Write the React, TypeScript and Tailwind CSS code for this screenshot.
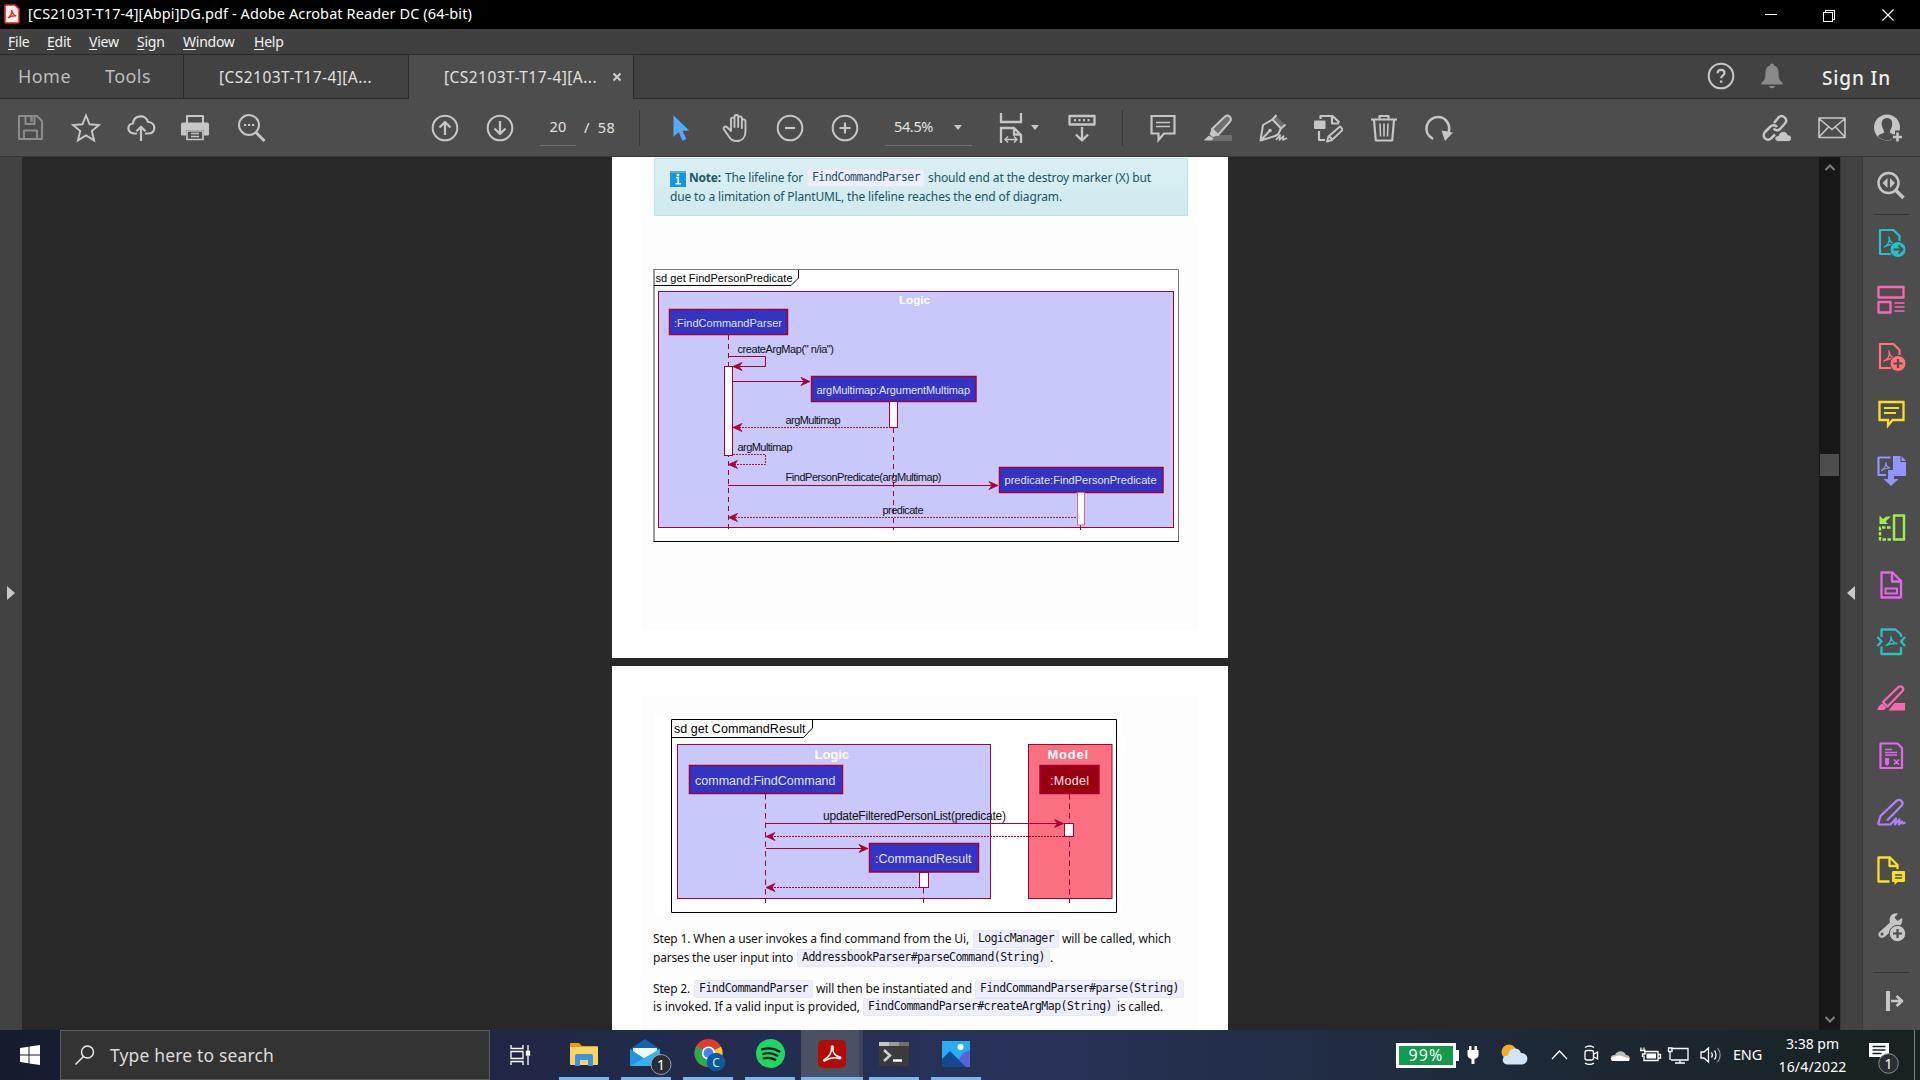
import { useLayoutEffect, useRef } from "react";
import type { ReactNode } from "react";

/* Sets letter spacing so that the label fills the width its class gives. */
function Fit({ className, children }: { className: string; children: string }) {
  const box = useRef<HTMLSpanElement>(null);
  const inner = useRef<HTMLSpanElement>(null);
  useLayoutEffect(() => {
    if (!box.current || !inner.current) return;
    inner.current.style.letterSpacing = "0px";
    const natural = inner.current.getBoundingClientRect().width;
    const target = box.current.getBoundingClientRect().width;
    inner.current.style.letterSpacing = `${(target - natural) / children.length}px`;
  }, [children]);
  return (
    <span ref={box} className={"inline-block shrink-0 whitespace-pre " + className}>
      <span ref={inner}>{children}</span>
    </span>
  );
}

function Icon({ children, className = "" }: { children: ReactNode; className?: string }) {
  return (
    <svg
      viewBox="0 0 30 30"
      width="30"
      height="30"
      className={"shrink-0 " + className}
      fill="none"
      stroke="currentColor"
      strokeWidth="2"
      strokeLinejoin="round"
    >
      {children}
    </svg>
  );
}

function Slot({ children, className = "w-[55px]" }: { children: ReactNode; className?: string }) {
  return <button className={"flex h-full shrink-0 items-center justify-center " + className}>{children}</button>;
}

const menus = [
  { k: "F", rest: "ile", w: "w-[23px]" },
  { k: "E", rest: "dit", w: "w-[26px]" },
  { k: "V", rest: "iew", w: "w-[32px]" },
  { k: "S", rest: "ign", w: "w-[30px]" },
  { k: "W", rest: "indow", w: "w-[55px]" },
  { k: "H", rest: "elp", w: "w-[32px]" },
];

function TitleBar() {
  return (
    <div className="flex h-[29px] items-center bg-black text-white">
      <svg viewBox="0 0 16 20" width="16" height="20" className="mb-[2px] ml-[4px] shrink-0">
        <path d="M2 1h9l4 4v13a1 1 0 0 1-1 1H2a1 1 0 0 1-1-1V2a1 1 0 0 1 1-1z" fill="#f7eeee" stroke="#e1251b" strokeWidth="1.6" />
        <path d="M4 14c3-2 4-5 3.800-8 .6 4 2 5.500 4.500 6-3-.4-6 .2-8.300 2z" fill="none" stroke="#e1251b" strokeWidth="1.300" />
      </svg>
      <Fit className="mb-px ml-[8px] w-[444px] text-[14.500px]">[CS2103T-T17-4][Abpi]DG.pdf - Adobe Acrobat Reader DC (64-bit)</Fit>
      <svg viewBox="0 0 135 14" width="135" height="14" className="mr-[22px] ml-auto" fill="none" stroke="#fff" strokeWidth="1" shapeRendering="crispEdges">
        <path d="M2 6.500h12M60.500 4.500h9v9h-9zM62.500 4.500v-2h9v9h-2" />
        <path d="M119.500 1.500l11 11M130.500 1.500l-11 11" shapeRendering="auto" strokeWidth="1.200" />
      </svg>
    </div>
  );
}

function MenuBar() {
  return (
    <div className="flex h-[26px] items-center gap-[16px] border-b border-[#2a2a2a] bg-[#404040] pl-[8px] text-[14px] text-[#f2f2f2]">
      {menus.map((m) => (
        <span key={m.k} className={"whitespace-nowrap tracking-[-0.250px] " + m.w}>
          <span className="underline underline-offset-2">{m.k}</span>
          {m.rest}
        </span>
      ))}
    </div>
  );
}

function TabBar() {
  return (
    <div className="flex h-[44px] items-stretch bg-[#424242] text-[#e0e0e0]">
      <div className="flex w-[184px] items-center border-r border-b border-[#2a2a2a] pl-[18px] text-[18px] text-[#bdbdbd]">
        <Fit className="w-[53px]">Home</Fit>
        <Fit className="ml-[34px] w-[46px]">Tools</Fit>
      </div>
      <div className="flex w-[225px] items-center border-r border-b border-[#2a2a2a] pt-[2px] pl-[35px] text-[15.500px]">
        <Fit className="w-[153px]">[CS2103T-T17-4][A...</Fit>
      </div>
      <div className="flex w-[225px] items-center border-r border-[#2a2a2a] bg-[#4d4d4d] pt-px pl-[35px] text-[15.500px]">
        <Fit className="w-[153px]">[CS2103T-T17-4][A...</Fit>
        <svg viewBox="0 0 10 10" width="10" height="10" className="mb-[2px] ml-[15px]" stroke="#d0d0d0" strokeWidth="2">
          <path d="M1.500 1.500l7 7M8.500 1.500l-7 7" />
        </svg>
      </div>
      <div className="flex flex-1 items-center border-b border-[#2a2a2a] text-[#c8c8c8]">
        <Icon className="mb-px ml-auto">
          <circle cx="15" cy="15" r="12.300" />
          <path d="M11.500 12.200c0-4.500 7-4.500 7 0 0 2.300-3.300 2.200-3.300 5" strokeWidth="2.200" />
          <path d="M13.900 19.500h2.500v2.200h-2.500z" fill="currentColor" stroke="none" />
        </Icon>
        <Icon className="mb-px ml-[21px] text-[#8a8a8a]">
          <path d="M15 2.500c1.500 0 2 1 2 2 3 1 4.500 3.500 4.500 7 0 7 1.500 8.500 4 10v2h-21v-2c2.500-1.500 4-3 4-10 0-3.500 1.500-6 4.500-7 0-1 .5-2 2-2zM12 25h6c-.5 3-5.500 3-6 0z" fill="currentColor" stroke="none" />
        </Icon>
        <Fit className="mt-[3px] mr-[29px] ml-[35px] w-[69px] text-[19px] font-medium text-[#f0f0f0]">Sign In</Fit>
      </div>
    </div>
  );
}

function Caret({ className = "" }: { className?: string }) {
  return (
    <svg viewBox="0 0 8 5" width="8" height="5" className={"shrink-0 " + className}>
      <path d="M0 0h8L4 5z" fill="#c8c8c8" />
    </svg>
  );
}

function Toolbar() {
  return (
    <div className="flex h-[58px] items-center border-b border-[#363636] bg-[#4d4d4d] pl-[3px] text-[#c6c6c6]">
      <Slot>
        <Icon className="text-[#8c8c8c]">
          <path d="M3 3h18l5 5v18H3zM9.500 3v8h9V3M8 26V17.500h13V26" />
          <path d="M15.500 4v5" strokeWidth="2.500" />
        </Icon>
      </Slot>
      <Slot>
        <Icon>
          <path d="M15 2.500l3.600 8.800 9.400.7-7.200 6.100 2.300 9.300-8.100-5-8.100 5 2.300-9.300L2 12l9.400-.7z" strokeLinejoin="miter" strokeWidth="1.900" />
        </Icon>
      </Slot>
      <Slot>
        <Icon>
          <path d="M11 20.500H8c-7 0-7.500-9.500-1-10C8 1.500 20 1 22 9c8 0 8.500 11 1 11.500h-4M15 28V14M10.500 18.200l4.500-4.500 4.500 4.500" strokeWidth="2.200" />
        </Icon>
      </Slot>
      <Slot className="w-[54px]">
        <Icon>
          <path d="M7 10V3h16v7" />
          <path d="M3 9.500h24a2 2 0 0 1 2 2v10a1 1 0 0 1-1 1h-4V17H6v5.500H2a1 1 0 0 1-1-1v-10a2 2 0 0 1 2-2z" fill="currentColor" stroke="none" />
          <path d="M7 18v8.500h16V18zM11 20.500h8M11 23.500h8" strokeWidth="1.700" />
        </Icon>
      </Slot>
      <Slot className="w-[56px] pl-[4px]">
        <Icon>
          <circle cx="12" cy="12" r="10" />
          <path d="M19 19.500l8.500 8.500" strokeWidth="3" />
          <path d="M7 12h2.200M11 12h2.200M15 12h2.200" strokeWidth="2.200" />
        </Icon>
      </Slot>
      <Slot className="ml-[139px] w-[55px]">
        <Icon>
          <circle cx="15" cy="15" r="12.300" />
          <path d="M15 22V9M9.500 14.500L15 9l5.500 5.500" strokeWidth="2.300" />
        </Icon>
      </Slot>
      <Slot>
        <Icon>
          <circle cx="15" cy="15" r="12.300" />
          <path d="M15 8v13M9.500 15.500L15 21l5.500-5.500" strokeWidth="2.300" />
        </Icon>
      </Slot>
      <div className="ml-[13px] flex h-[36px] w-[36px] items-center justify-center border-b border-[#6e6e6e] text-[14.500px] text-[#e2e2e2]">
        <Fit className="w-[17px]">20</Fit>
      </div>
      <Fit className="ml-[8px] w-[31px] text-[14.500px] text-[#e2e2e2]">/  58</Fit>
      <div className="ml-[24px] h-[36px] w-px bg-[#363636]" />
      <Slot className="ml-[13px] w-[55px]">
        <Icon>
          <path d="M7.500 2.500v21.500l5-5 4 8.800 3.800-1.800-3.700-8 6.600-.5z" fill="#54a9ff" stroke="none" />
        </Icon>
      </Slot>
      <Slot className="w-[54px]">
        <Icon>
          <path d="M9.500 17V6.500c0-2.500 3.500-2.500 3.500 0V14 4c0-2.700 3.700-2.700 3.700 0v10V5.300c0-2.600 3.700-2.600 3.700 0V15 8.200c0-2.500 3.400-2.500 3.600 0V18c0 6-3 10-8.500 10C10.500 28 9 26 7 23l-4.500-6.500c-1.400-2.300 1.300-3.800 3-2.200L9.500 18z" strokeWidth="1.900" transform="translate(1.500 0)" />
        </Icon>
      </Slot>
      <Slot>
        <Icon>
          <circle cx="15" cy="15" r="12.300" />
          <path d="M10 15h10" strokeWidth="2.200" />
        </Icon>
      </Slot>
      <Slot>
        <Icon>
          <circle cx="15" cy="15" r="12.300" />
          <path d="M9.500 15h11M15 9.500v11" strokeWidth="2.200" />
        </Icon>
      </Slot>
      <div className="ml-[13px] flex h-[36px] w-[87px] items-center border-b border-[#6e6e6e] pl-[9px] text-[14.500px] text-[#e2e2e2]">
        <Fit className="w-[39px]">54.5%</Fit>
        <Caret className="ml-[21px]" />
      </div>
      <Icon className="ml-[24px]">
        <path d="M5 0v9h20V0M5 30V15h13l7 7v8M18 15v6.500h7" strokeWidth="2.300" strokeLinejoin="miter" />
        <path d="M9 26.500h12M12 23.500l-3 3 3 3M18 23.500l3 3-3 3" strokeWidth="1.500" />
      </Icon>
      <Caret className="ml-[5px]" />
      <Icon className="ml-[28px]">
        <path d="M2.500 3h25v8.500h-25zM15 14v13M9 21.500l6 6 6-6" strokeWidth="2.300" />
        <path d="M7 7.200h2M11.500 7.200h2M16 7.200h2M20.500 7.200h2" strokeWidth="2.200" />
      </Icon>
      <div className="ml-[25px] h-[36px] w-px bg-[#363636]" />
      <Icon className="ml-[25px]">
        <path d="M3.500 3h23v17.500H16L10.500 27v-6.500h-7z" strokeLinejoin="miter" strokeWidth="2.200" />
        <path d="M8 9.500h14M8 13.500h14" strokeWidth="1.500" />
      </Icon>
      <Icon className="ml-[25px]">
        <path d="M9 22h20v6H6z" fill="#6e6e6e" stroke="none" />
        <path d="M9 16L22 3.500c3.500-2.500 7.500 1.500 5 5L15 22z" fill="#6e6e6e" />
        <path d="M9 16l-2 5.500 2.500 2L15 22M6 23l-4.500 4h7l1.500-1.500z" fill="currentColor" strokeWidth="1" />
      </Icon>
      <Icon className="ml-[25px]">
        <path d="M18 3l9 9-3.500 3-9-9z" fill="#6e6e6e" stroke="none" />
        <path d="M18.500 2l-4 4.500M27.500 11.500l-4.500 4M14.500 6.500l8.500 9-3 6-3 1.500-14.500 4.500L5 12zM2.500 27.500l8.500-9" />
        <circle cx="12" cy="17.500" r="1.800" fill="currentColor" stroke="none" />
        <path d="M18 27l4-5-.5 5 4-4-.5 4 4-2" strokeWidth="1.700" />
      </Icon>
      <Icon className="ml-[25px]">
        <path d="M7.500 6V3h12l7 6.500M19 3v7.500h7M6 18v9h6" strokeWidth="2.200" />
        <rect x="1" y="7.500" width="11.500" height="8.500" rx="1" fill="currentColor" stroke="none" />
        <path d="M27 13.500l3 3L19 27l-5 1.500 1.500-5zM16 23l3.500 3.500" strokeWidth="1.900" />
      </Icon>
      <Icon className="ml-[26px]">
        <path d="M2 6.500h26M10.500 6V3h9v3M5 7l1.800 20.500h16.400L25 7" strokeWidth="2.200" />
        <path d="M11 10.500l.5 13M15 10.500v13M19 10.500l-.5 13" strokeWidth="1.600" />
      </Icon>
      <Icon className="ml-[24px]">
        <path d="M10 26C-2 19 4 4 15 4c8 0 13 8 10.500 15.500" strokeWidth="2.600" />
        <path d="M18.500 17.500l11.500 2-8 8.500z" fill="currentColor" stroke="none" />
      </Icon>
      <Icon className="ml-auto">
        <path d="M13 10l4.500-5.500c4-4 10 1.500 6.500 6L19 16c-2 2-5 1.500-6.500-.5M16 14c-1.500-2.500-5-2.500-7 0L4 19c-4 5 2.500 10.500 6.500 6l3.500-3.500" strokeWidth="2.500" />
        <path d="M17.500 28.500c-5 0-4.500-6 0-6 1-5 8-5.500 9.500-.5 5 0 4.500 6.500 0 6.500z" fill="currentColor" stroke="#4d4d4d" strokeWidth="0.800" />
      </Icon>
      <Icon className="ml-[26px]">
        <path d="M2 5h26v19.500H2zM2 5.500l13 11 13-11M2 24l9.500-10M28 24l-9.500-10" strokeWidth="1.600" />
      </Icon>
      <Icon className="mr-[17px] ml-[26px]">
        <circle cx="14" cy="14.500" r="13" fill="currentColor" stroke="none" />
        <path d="M14 5c-4.500 0-6 4-5 8 .5 2.500 2 4 2 6 0 2-5 1.500-6 4.500 5 5 13 5 18 0-1-3-6-2.500-6-4.500s1.500-3.500 2-6c1-4-.5-8-5-8z" fill="#4d4d4d" stroke="none" />
        <path d="M24.500 17.500v12M18.500 24H30" stroke="#4d4d4d" strokeWidth="5" />
        <path d="M24.500 19.500v9M20 24h9" strokeWidth="2.600" />
      </Icon>
    </div>
  );
}

function Arrow({ x, y, dir }: { x: number; y: number; dir: 1 | -1 }) {
  const b = -dir;
  return (
    <path
      d={`M${x} ${y}L${x + b * 9} ${y - 4}L${x + b * 6} ${y}L${x + b * 9} ${y + 4}Z`}
      fill="#a80036"
      stroke="#a80036"
      strokeWidth="0.800"
      strokeDasharray="none"
    />
  );
}

function Label({
  x,
  x2,
  y,
  children,
  fill = "#111",
  size = 11,
  bold = false,
}: {
  x: number;
  x2: number;
  y: number;
  children: string;
  fill?: string;
  size?: number;
  bold?: boolean;
}) {
  return (
    <text
      x={x}
      y={y}
      fontSize={size}
      fill={fill}
      stroke="none"
      textLength={x2 - x}
      fontWeight={bold ? 700 : 400}
      fontFamily='"Liberation Sans", Arial, sans-serif'
    >
      {children}
    </text>
  );
}

function PredicateDiagram() {
  return (
    <svg viewBox="652 268 530 276" width="530" height="276" className="block" fill="none" stroke="#a80036">
      <path d="M652 268h530v276H652z" fill="#fff" stroke="none" />
      <path d="M654 269.500h524.500V541" stroke="#777" />
      <path d="M654 269v272.500" stroke="#777" strokeWidth="1.500" />
      <path d="M653.500 541.500h525.500M654 285.500h137l7.500-7.500v-8" stroke="#000" />
      <Label x={655.5} x2={792.5} y={281.5} fill="#000">sd get FindPersonPredicate</Label>
      <rect x="658.500" y="291.500" width="515" height="236" fill="#c8c8fa" />
      <Label x={899} x2={930} y={303.5} fill="#fff" size={11.5} bold>Logic</Label>
      <path d="M728.500 335v198M893.500 428v102M1080.500 525v8" strokeDasharray="5 4" />
      <rect x="669.500" y="309.500" width="118" height="25" fill="#3333c4" strokeWidth="1.500" />
      <Label x={674} x2={782} y={326.5} fill="#e4e4ff">:FindCommandParser</Label>
      <Label x={737.5} x2={834} y={353}>createArgMap(" n/ia")</Label>
      <path d="M728 356.500h37.500v10H733M733 381.500h75M728 485.500h268" />
      <rect x="724.500" y="366.500" width="8" height="89" fill="#fff" />
      <rect x="811.500" y="376.500" width="164.500" height="25" fill="#3333c4" strokeWidth="1.500" />
      <Label x={816.5} x2={970} y={393.5} fill="#e4e4ff">argMultimap:ArgumentMultimap</Label>
      <rect x="889.500" y="401.500" width="8" height="26" fill="#fff" />
      <Label x={785.5} x2={840.5} y={424}>argMultimap</Label>
      <Label x={737.5} x2={792.5} y={451}>argMultimap</Label>
      <path d="M733 427.500h156M733 454.500h32.500v10H729M729 517.500h348" strokeDasharray="2 1" strokeWidth="0.900" />
      <Label x={785.5} x2={941.5} y={481}>FindPersonPredicate(argMultimap)</Label>
      <rect x="999.500" y="467.500" width="163.500" height="25" fill="#3333c4" strokeWidth="1.500" />
      <Label x={1004.5} x2={1156.5} y={484} fill="#e4e4ff">predicate:FindPersonPredicate</Label>
      <rect x="1077.500" y="492.500" width="7" height="32.500" fill="#fff" stroke="#cf6a8a" />
      <Label x={882.5} x2={923.5} y={514}>predicate</Label>
      <Arrow x={733} y={366.5} dir={-1} />
      <Arrow x={810} y={381.5} dir={1} />
      <Arrow x={733} y={427.5} dir={-1} />
      <Arrow x={728.5} y={464.5} dir={-1} />
      <Arrow x={998} y={485.5} dir={1} />
      <Arrow x={728.5} y={517.5} dir={-1} />
    </svg>
  );
}

function ResultDiagram() {
  return (
    <svg viewBox="654 714 468 202" width="468" height="202" className="ml-px block" fill="none" stroke="#a80036">
      <path d="M654 714h468v202H654z" fill="#fff" stroke="none" />
      <path d="M671.500 719.500h445v193h-445zM671.500 737.500h132l9-9.500v-8" stroke="#000" />
      <Label x={674} x2={805.5} y={733} size={12.5} fill="#000">sd get CommandResult</Label>
      <rect x="677.500" y="744.500" width="313" height="154" fill="#c8c8fa" />
      <rect x="1028.500" y="744.500" width="83.500" height="154" fill="#fa7080" />
      <Label x={814.5} x2={849} y={758.5} size={13} fill="#fff" bold>Logic</Label>
      <Label x={1047.5} x2={1088} y={758.5} size={13} fill="#fff" bold>Model</Label>
      <path d="M765.500 794v109M923.500 888v15M1069.500 794v109" strokeDasharray="5.500 4" />
      <rect x="689.500" y="765.500" width="153" height="28" fill="#3333c4" strokeWidth="1.500" />
      <Label x={695} x2={835.5} y={784.5} size={12.5} fill="#e4e4ff">command:FindCommand</Label>
      <rect x="1040" y="765.500" width="59" height="28" fill="#980010" strokeWidth="1.500" />
      <Label x={1050} x2={1089} y={784.5} size={12.5} fill="#ffe4e8">:Model</Label>
      <Label x={823} x2={1006} y={819.5} size={12}>updateFilteredPersonList(predicate)</Label>
      <path d="M766 823.500h295M766 848.500h100" />
      <rect x="1064.500" y="823.500" width="9" height="13" fill="#fff" />
      <rect x="869.500" y="843.500" width="109" height="28.500" fill="#3333c4" strokeWidth="1.500" />
      <Label x={875} x2={971.5} y={863} size={12.5} fill="#e4e4ff">:CommandResult</Label>
      <rect x="919.500" y="872.500" width="9" height="15" fill="#fff" />
      <path d="M768 836.500h296M768 887.500h151" strokeDasharray="2 1" />
      <Arrow x={1063.5} y={823.5} dir={1} />
      <Arrow x={766} y={836.5} dir={-1} />
      <Arrow x={868} y={848.5} dir={1} />
      <Arrow x={766} y={887.5} dir={-1} />
    </svg>
  );
}

function Code({ className, children }: { className: string; children: string }) {
  return (
    <span className="flex h-[18px] shrink-0 items-center rounded-[2px] border border-[#e8e8f2] bg-[#eeeeff] px-[4px] font-['DejaVu_Sans_Mono',monospace] text-[11.500px]">
      <Fit className={className}>{children}</Fit>
    </span>
  );
}

function Pages() {
  return (
    <div className="w-[616px] shrink-0 overflow-hidden text-[12px] text-[#111]">
      <div className="h-[501px] bg-white px-[30px]">
        <div className="flex h-[473px] flex-col bg-[#fdfdfd] px-[10px] pt-px">
          <div className="ml-[2px] h-[58px] w-[534px] border border-[#bee5eb] bg-linear-to-b from-[#daeff3] to-[#d0eaef] pt-[9px] pl-[15px] text-[#1b5563]">
            <div className="flex h-[20px] items-center">
              <svg viewBox="0 0 16 16" width="16" height="16" className="mt-px shrink-0">
                <path d="M0 0h16v16H0z" fill="#1397e0" />
                <path d="M0 0h16v2H0z" fill="#5fb0c8" />
                <path d="M6 6.500h2.200V12.500M5.500 12.700h5.500" fill="none" stroke="#fff" strokeWidth="1.500" />
                <path d="M6.800 2.800h2.400v2.200H6.800z" fill="#fff" />
              </svg>
              <Fit className="ml-[3px] w-[32px] font-bold">Note:</Fit>
              <Fit className="mr-[4px] ml-[4px] w-[78px]">The lifeline for</Fit>
              <Code className="w-[108px]">FindCommandParser</Code>
              <Fit className="ml-[3px] w-[223px]">should end at the destroy marker (X) but</Fit>
            </div>
            <div className="flex h-[18px] items-center">
              <Fit className="w-[392px]">due to a limitation of PlantUML, the lifeline reaches the end of diagram.</Fit>
            </div>
          </div>
          <div className="mt-[52px]">
            <PredicateDiagram />
          </div>
        </div>
      </div>
      <div className="h-[8px] bg-[#282828]" />
      <div className="h-[364px] bg-white px-[30px] pt-[30px]">
        <div className="h-[334px] bg-[#fdfdfd] pt-[18px] pl-[11px]">
          <ResultDiagram />
          <div className="mt-[13px] flex h-[19px] items-center">
            <Fit className="mr-[4px] w-[316px]">Step 1. When a user invokes a find command from the Ui,</Fit>
            <Code className="w-[76px]">LogicManager</Code>
            <Fit className="ml-[3px] w-[109px]">will be called, which</Fit>
          </div>
          <div className="flex h-[19px] items-center">
            <Fit className="mr-[4px] w-[140px]">parses the user input into</Fit>
            <Code className="w-[243px]">AddressbookParser#parseCommand(String)</Code>
            <span>.</span>
          </div>
          <div className="mt-[13px] flex h-[18px] items-center">
            <Fit className="mr-[4px] w-[37px]">Step 2.</Fit>
            <Code className="w-[109px]">FindCommandParser</Code>
            <Fit className="mr-[3px] ml-[3px] w-[156px]">will then be instantiated and</Fit>
            <Code className="w-[199px]">FindCommandParser#parse(String)</Code>
          </div>
          <div className="flex h-[18px] items-center">
            <Fit className="mr-[3px] w-[207px]">is invoked. If a valid input is provided,</Fit>
            <Code className="w-[244px]">FindCommandParser#createArgMap(String)</Code>
            <Fit className="w-[46px]">is called.</Fit>
          </div>
        </div>
      </div>
    </div>
  );
}

function PdfMark() {
  return <path d="M8 19c4-2 6-6 5-10 .5 5 3 7 7 7-5 0-8.500 1-12 3z" strokeWidth="1.400" />;
}

function ToolPane() {
  const item = "flex h-[57px] w-full items-center justify-center";
  return (
    <div className="flex w-[58px] shrink-0 flex-col items-center border-l border-[#3a3a3a] bg-[#4d4d4d] pr-px">
      <div className="flex h-[57px] w-full items-center justify-center text-[#c6c6c6]">
        <Icon>
          <circle cx="12.500" cy="12" r="10" strokeWidth="2.500" />
          <path d="M20 19.500l7.500 7.500" strokeWidth="3.500" />
          <path d="M11.500 7v10l-5-5zM14 7v10l5-5z" fill="currentColor" stroke="none" />
        </Icon>
      </div>
      <div className="-mb-px h-px w-[35px] shrink-0 bg-[#363636]" />
      <div className={item + " text-[#26c0c7]"}>
        <Icon>
          <path d="M15 26H4V2h13.500l6 6v5" strokeWidth="2.200" />
          <PdfMark />
          <circle cx="22" cy="21.500" r="8" fill="currentColor" stroke="#4d4d4d" strokeWidth="1" />
          <path d="M17.500 21.500H26M22.500 17.500l4 4-4 4" stroke="#4d4d4d" />
        </Icon>
      </div>
      <div className={item + " text-[#f768b4]"}>
        <Icon>
          <path d="M2.500 2h25v10.500h-25zM2.500 17h12v10.500h-12z" strokeWidth="2.300" />
          <path d="M18.500 18h10M18.500 22h10M18.500 26h10" strokeWidth="1.500" />
        </Icon>
      </div>
      <div className={item + " text-[#ff7378]"}>
        <Icon>
          <path d="M15 26H4V2h13.500l6 6v5" strokeWidth="2.200" />
          <PdfMark />
          <circle cx="22" cy="21.500" r="8" fill="currentColor" stroke="#4d4d4d" strokeWidth="1" />
          <path d="M17.500 21.500h9M22 17v9" stroke="#4d4d4d" strokeWidth="2.200" />
        </Icon>
      </div>
      <div className={item + " text-[#fbdc27]"}>
        <Icon>
          <path d="M3.500 3h24v18H16.500L12 26.500V21H3.500z" strokeWidth="2.300" strokeLinejoin="miter" />
          <path d="M8 9h15M8 14h12" />
        </Icon>
      </div>
      <div className={item + " text-[#9494ff]"}>
        <Icon>
          <path d="M10 19H2.500V1.500h12" strokeWidth="2.200" />
          <path d="M5.500 14.500c3-2 4.500-4.500 4.500-8 0 3 1.500 5 4 5.500-3 0-6 .5-8.500 2.500z" strokeWidth="1.200" />
          <path d="M17 0h7.500v6H30v14H18v3h4.500L15 30l-7.500-7H12v-9h5zM25.500 0L30 5h-4.500z" fill="currentColor" stroke="none" />
        </Icon>
      </div>
      <div className={item + " text-[#9bf04d]"}>
        <Icon>
          <path d="M18 2.500h10v24H18z" strokeWidth="2.500" />
          <path d="M15 26.500H4v-12h11" strokeWidth="2.500" strokeDasharray="3.500 1.500" />
          <path d="M3.500 2.500v8.500h8.500L9.500 8.500 15 3.500h-4.500L7 6z" fill="currentColor" stroke="none" />
        </Icon>
      </div>
      <div className={item + " text-[#e466ee]"}>
        <Icon>
          <path d="M5.500 2.500h11l8.500 8.500v16.500H5.500zM16 3v8.500h9" strokeWidth="2.300" />
          <path d="M9.500 18.500h11.500v5H9.500z" />
        </Icon>
      </div>
      <div className={item + " text-[#26c0c7]"}>
        <Icon>
          <path d="M5.500 10V2.500h14l5.500 5v2.500M5.500 19.500v7.500H25v-7" strokeWidth="2.300" />
          <path d="M1.500 10l4 4.500-4 4.500M29 10l-4 4.500 4 4.500" strokeWidth="2.300" />
          <path d="M10 18.500c3.500-2 5.500-5 5-9 .5 4 2.500 6.500 6 7-4-.2-7.500.2-11 2z" strokeWidth="1.400" />
        </Icon>
      </div>
      <div className={item + " text-[#f768ad]"}>
        <Icon>
          <path d="M7 18L22.500 3c3-2 6 1.500 4 4L11.500 22.500z" strokeWidth="2.300" />
          <path d="M6.500 19.500l4 4L8 26H1.500c0-2.500 2-5.500 5-6.500zM18.500 19H29v7.500H12.500z" fill="currentColor" stroke="none" />
        </Icon>
      </div>
      <div className={item + " text-[#e466ee]"}>
        <Icon>
          <path d="M4.500 2.500h17L26 7v20H4.500z" strokeWidth="2.200" />
          <path d="M9 8.500h7M9 11.500h12M9 14h12M18 18.500l5 5M23 18.500l-5 5" strokeWidth="1.500" />
          <path d="M9 17h4v6l-2 2-2-2z" fill="currentColor" stroke="none" />
        </Icon>
      </div>
      <div className={item + " text-[#b080f5]"}>
        <Icon>
          <path d="M2 26.500l2.500-8.500L20.500 2.800c3.500-2.500 8 1.500 5 5L11 22.500" strokeWidth="2.300" />
          <path d="M2 26.500h12.500l5.500-6-1 6 4.500-5-.5 5 3-3 .5 2 3-1" strokeWidth="2.200" />
        </Icon>
      </div>
      <div className={item + " text-[#fbdc27]"}>
        <Icon>
          <path d="M13.500 26.500h-11v-24h11.500l7.500 7.500v4M13.500 3v8h8" strokeWidth="2.300" />
          <path d="M17 16h11a1 1 0 0 1 1 1v9a1 1 0 0 1-1 1h-6.500L18.500 30v-3H17a1 1 0 0 1-1-1v-9a1 1 0 0 1 1-1z" fill="currentColor" stroke="none" />
          <path d="M19 20h7M19 23h7" stroke="#4d4d4d" strokeWidth="1.400" />
        </Icon>
      </div>
      <div className={item + " text-[#c6c6c6]"}>
        <Icon>
          <path d="M3 20.500L14 10.500C12.500 5 16 .500 22 1.500l-3.500 4 3 3.500 4.500-3c1 3.500-.5 7-3 8-4-.500-7 2-7.500 5L9 24.500c-4 3.500-8-1-6-4z" fill="currentColor" stroke="none" />
          <circle cx="6" cy="22" r="1.500" fill="#4d4d4d" stroke="none" />
          <circle cx="21.500" cy="21.500" r="8.200" fill="currentColor" stroke="#4d4d4d" strokeWidth="1" />
          <path d="M17 21.500h9M21.500 17v9" stroke="#4d4d4d" strokeWidth="2.200" />
        </Icon>
      </div>
      <div className="mt-[17px] h-px w-[35px] bg-[#363636]" />
      <div className="flex flex-1 items-center pb-px pl-[5px] text-[#c6c6c6]">
        <Icon>
          <path d="M9 5v20" strokeWidth="4" />
          <path d="M12 15h11M17.500 10l5.500 5-5.500 5" strokeWidth="2.700" />
        </Icon>
      </div>
    </div>
  );
}

function Viewer() {
  return (
    <div className="flex h-[873px] bg-[#282828]">
      <div className="flex w-[22px] shrink-0 items-center bg-[#424242] pb-[2px] pl-[7px]">
        <svg viewBox="0 0 8 14" width="8" height="14">
          <path d="M0 0v14l8-7z" fill="#c8c8c8" />
        </svg>
      </div>
      <div className="flex flex-1 pl-[590px]">
        <Pages />
      </div>
      <div className="flex w-[21px] shrink-0 flex-col items-center bg-[#171717]">
        <svg viewBox="0 0 10 7" width="10" height="7" className="mt-[7px]" fill="none" stroke="#7e7e7e" strokeWidth="2">
          <path d="M.500 6L5 1.500 9.500 6" />
        </svg>
        <div className="mt-[283px] h-[22px] w-[19px] bg-[#4d4d4d]" />
        <svg viewBox="0 0 10 7" width="10" height="7" className="mt-auto mb-[7px]" fill="none" stroke="#7e7e7e" strokeWidth="2">
          <path d="M.500 1L5 5.500 9.500 1" />
        </svg>
      </div>
      <div className="flex w-[22px] shrink-0 items-center border-l border-[#363636] bg-[#424242] pb-[2px] pl-[6px]">
        <svg viewBox="0 0 8 14" width="8" height="14">
          <path d="M8 0v14L0 7z" fill="#c8c8c8" />
        </svg>
      </div>
      <ToolPane />
    </div>
  );
}

function TaskButton({ children, active = false }: { children: ReactNode; active?: boolean }) {
  return (
    <div className={"flex h-full w-[62px] flex-col items-center " + (active ? "border-r-4 border-[#3d4358] bg-[#4b5165]" : "")}>
      <div className="flex h-[47px] items-center">{children}</div>
      <div className={"h-[3px] bg-[#76b9ed] " + (active ? "-mr-1 w-[62px]" : "w-[50px]")} />
    </div>
  );
}

function Taskbar() {
  return (
    <div className="flex h-[50px] items-stretch bg-linear-to-r from-[#161c2e] via-[#28325a] via-52% to-[#17211f] text-white">
      <div className="flex w-[60px] items-center justify-center">
        <svg viewBox="0 0 20 20" width="20" height="20" fill="#fff">
          <path d="M0 3l8.500-1.200v7.700H0zM9.500 1.600L20 0v9.500H9.500zM0 10.500h8.500v7.700L0 17zM9.500 10.500H20V20L9.500 18.400z" />
        </svg>
      </div>
      <div className="flex w-[430px] items-center border border-[#5c5c5c] bg-[#333] pl-[14px]">
        <svg viewBox="0 0 20 20" width="20" height="20" fill="none" stroke="#f0f0f0" strokeWidth="1.400">
          <circle cx="12.500" cy="7" r="6" />
          <path d="M8.500 11.500L.500 19.500" />
        </svg>
        <Fit className="ml-[15px] w-[164px] text-[17.500px] text-[#dcdcdc]">Type here to search</Fit>
      </div>
      <div className="flex w-[63px] items-center justify-center pr-[2px]">
        <svg viewBox="0 0 21 20" width="21" height="20" fill="none" stroke="#fff" strokeWidth="1.300">
          <path d="M1 0v3.500h12V0M1 20v-3.500h12V20M1 6.500h12v7H1zM18 0v6M18 11v9" />
          <path d="M16.500 6.500h3v3.500h-3z" fill="#fff" />
        </svg>
      </div>
      <TaskButton>
        <svg viewBox="0 0 28 24" width="28" height="24">
          <path d="M0 2a1 1 0 0 1 1-1h8l3 3h15a1 1 0 0 1 1 1v17H0z" fill="#e2a10e" />
          <path d="M0 5h28v17a1 1 0 0 1-1 1H1a1 1 0 0 1-1-1z" fill="#fdd364" />
          <path d="M5 24V14a2 2 0 0 1 2-2h14a2 2 0 0 1 2 2v10h-5v-6h-8v6z" fill="#3a93dc" />
        </svg>
      </TaskButton>
      <TaskButton>
        <svg viewBox="0 -6 42 44" width="42" height="44" className="ml-[10px]">
          <path d="M0 11L15 1l15 10v17H0z" fill="#0f62b8" />
          <path d="M3 10h24v10H3z" fill="#f4f8fc" />
          <path d="M0 11l15 10 15-10v17H0z" fill="#1f93e4" />
          <path d="M0 28L30 11v17z" fill="#38b1f2" />
          <circle cx="31" cy="26.500" r="10" fill="#2a2d35" stroke="#9a9da5" />
          <text x="31" y="31.500" textAnchor="middle" fontSize="14" fill="#fff" fontFamily='"Noto Sans", sans-serif'>1</text>
        </svg>
      </TaskButton>
      <TaskButton>
        <svg viewBox="0 0 32 34" width="32" height="34" className="mt-[2px] ml-[3px]">
          <circle cx="14.500" cy="15" r="14" fill="#e33b2e" />
          <path d="M14.500 15L27 8.700A14 14 0 0 1 14.500 29z" fill="#fcc934" />
          <path d="M14.500 15v14A14 14 0 0 1 2.400 8z" fill="#2da94f" />
          <circle cx="14.500" cy="15" r="6.600" fill="#fff" />
          <circle cx="14.500" cy="15" r="5" fill="#4285f4" />
          <circle cx="22" cy="24" r="9.300" fill="#0c5a9e" />
          <text x="22" y="28.500" textAnchor="middle" fontSize="12" fill="#cfe4f7" fontFamily='"Noto Sans", sans-serif'>C</text>
        </svg>
      </TaskButton>
      <TaskButton>
        <svg viewBox="0 0 28 28" width="29" height="29">
          <circle cx="14" cy="14" r="14" fill="#1ed760" />
          <path d="M6 10c5.500-1.500 11.500-1 16.500 2M7 14.500c4.500-1.300 9.500-.8 13.500 1.600M7.500 18.700c4-1 7.500-.6 11 1.400" fill="none" stroke="#10182a" strokeWidth="2.200" strokeLinecap="round" />
        </svg>
      </TaskButton>
      <TaskButton active>
        <svg viewBox="0 0 28 28" width="28" height="28" className="ml-[3px]">
          <rect width="28" height="28" rx="5" fill="#b30b00" />
          <path d="M6 20c5-3 8-8 7.500-13-.2-1.500 1.800-1.500 1.500.5-.8 4.500 2 9 7 9.500 1.500.5.500 2-1 1.500-4.500-1.500-9-1-13.500 2-1 .8-2.200.2-1.500-.5z" fill="none" stroke="#fff" strokeWidth="1.500" />
        </svg>
      </TaskButton>
      <TaskButton>
        <svg viewBox="0 0 30 24" width="30" height="24" className="mr-px">
          <rect width="30" height="24" rx="1.500" fill="#3b3b3b" />
          <path d="M0 0h10v4H0z" fill="#c8c8c8" />
          <path d="M10 0h10v4H10z" fill="#9a9a9a" />
          <path d="M20 0h10v4H20z" fill="#707070" />
          <path d="M5 8l6 5.500L5 19" fill="none" stroke="#d0d0d0" strokeWidth="2.500" />
          <path d="M14 18.500h9" stroke="#fff" strokeWidth="2.500" />
        </svg>
      </TaskButton>
      <TaskButton>
        <svg viewBox="0 0 28 28" width="28" height="28">
          <path d="M0 1h28v26H0z" fill="#27aef0" />
          <path d="M28 10v17H12l9-14z" fill="#5a62d8" />
          <path d="M0 19L8 11l16 16H0z" fill="#124a92" />
          <circle cx="18.500" cy="7" r="3" fill="#fff" />
        </svg>
      </TaskButton>
      <div className="ml-auto flex items-center">
        <div className="flex h-[25px] w-[60px] items-center justify-center border-[3px] border-white bg-[#149a49] text-[16px]">
          <Fit className="w-[35px] leading-none">99%</Fit>
        </div>
        <div className="h-[11px] w-[3px] bg-white" />
        <svg viewBox="0 0 12 18" width="12" height="18" className="ml-[8px]" fill="#fff">
          <path d="M2 0h2.500v4h3V0H10v4h1.500v5c0 2.500-2 3.500-4 4v5h-3v-5c-2-.5-4-1.500-4-4V4H2z" />
        </svg>
        <svg viewBox="0 0 28 22" width="28" height="22" className="ml-[22px]">
          <circle cx="8" cy="8" r="7.500" fill="#f9a825" />
          <path d="M7 20.500c-7 0-7-9 0-9C8 3 18 2.500 20 9c8.500 0 8.500 11.500 0 11.500z" fill="#cfe6fa" />
        </svg>
        <svg viewBox="0 0 138 20" width="138" height="20" className="ml-[22px]" fill="none" stroke="#fff" strokeWidth="1.300">
          <path d="M1 14l7.500-8 7.500 8" />
          <rect x="34" y="5.500" width="8.500" height="9.500" rx="2" />
          <path d="M43 9l3.500-2v7L43 12M34 2.500c3-2 6-2 9 0M34 18c3 2 6 2 9 0" />
          <path d="M62 16c-4-1-2.500-7 2-6 2-5 9-5 11 0 5 0 5 6 1 6z" fill="#b9bcbd" stroke="none" />
          <path d="M62 16c-3.500-1-2-4.500 2-4.500 4-2.500 9 0 10 1 4-.5 6 3.500 3 3.500z" fill="#fff" stroke="none" />
          <path d="M93 6.500h14v9H93v-5M107.500 9.500h2v3.500h-2M90 2.500v3M93 2.500v3M89 5.500h5v3.500h-2.500v3" />
          <path d="M95.500 8.500h9.500v5H95.500z" fill="#fff" stroke="none" />
          <path d="M120 3.500h17v11.500h-17M129 15v3M124 18h10M117.500 3h3.500v3.500h-3.500zM119 7v8" />
        </svg>
        <svg viewBox="0 0 22 18" width="22" height="18" className="ml-[11px]" fill="none" stroke="#fff" strokeWidth="1.300">
          <path d="M1 6h3l4.500-4v14L4 12H1zM11.500 6.500c1 1.500 1 3.500 0 5M14.500 4.500c2 2.500 2 6.500 0 9" />
          <path d="M17.500 2c3.500 4 3.500 10 0 14" stroke="#8a8f92" />
        </svg>
        <Fit className="ml-[11px] w-[29px] text-[14.500px]">ENG</Fit>
        <div className="ml-[16px] flex w-[70px] flex-col items-center pr-px text-[14px] leading-[23px]">
          <Fit className="w-[53px]">3:38 pm</Fit>
          <Fit className="w-[68px]">16/4/2022</Fit>
        </div>
        <svg viewBox="0 0 32 34" width="32" height="34" className="mt-[9px] ml-[21px]">
          <path d="M0 0h20v14h-4v5l-5-5H0z" fill="#fff" />
          <path d="M3.500 3.500h13M3.500 7h13M3.500 10.500h9" stroke="#1a2026" strokeWidth="1.500" />
          <circle cx="19.500" cy="20.500" r="9.800" fill="#2b2f33" stroke="#8a8f92" />
          <text x="19.500" y="25.500" textAnchor="middle" fontSize="14" fill="#fff" fontFamily='"Noto Sans", sans-serif'>1</text>
        </svg>
        <div className="mr-[5px] ml-[13px] h-[50px] w-px bg-[#7d8484]" />
      </div>
    </div>
  );
}

export default function App() {
  return (
    <div className="h-[1080px] w-[1920px] overflow-hidden bg-[#282828] font-['Noto_Sans','Open_Sans',sans-serif] leading-normal">
      <TitleBar />
      <MenuBar />
      <TabBar />
      <Toolbar />
      <Viewer />
      <Taskbar />
    </div>
  );
}
